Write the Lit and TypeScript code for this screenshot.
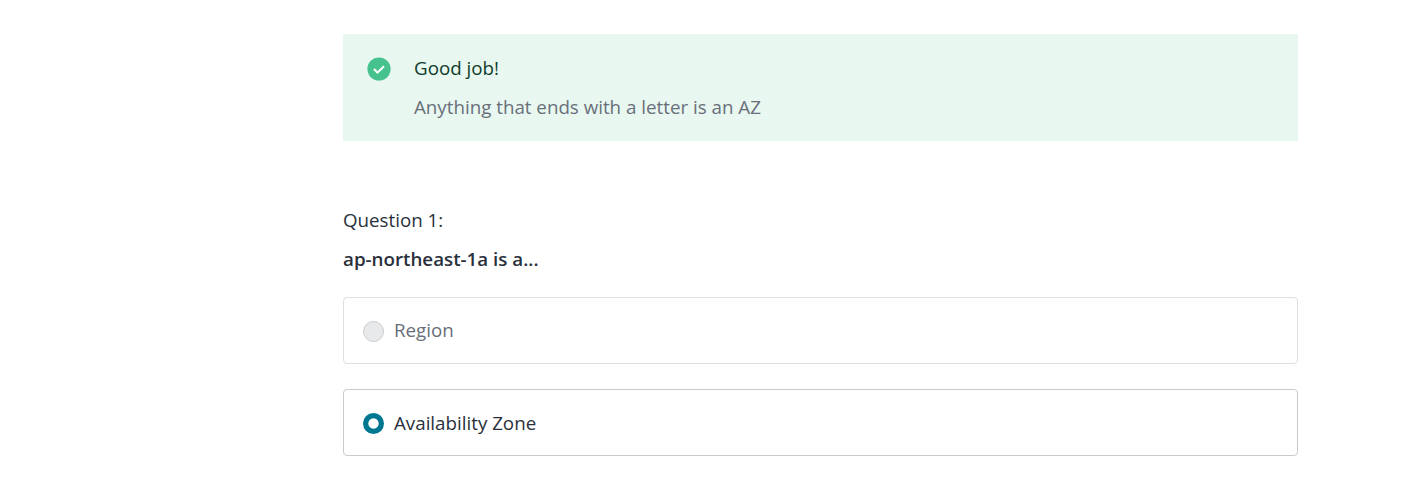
import { LitElement, html, css } from "lit";
import { customElement } from "lit/decorators.js";

@customElement("app-root")
export class AppRoot extends LitElement {
  static styles = css`
    :host { display: block; box-sizing: border-box; min-height: 498px; padding: 34px 103px 42px 343px; background: #fff; color: #29303b; font-family: "Open Sans", sans-serif; font-size: 18.75px; line-height: 25px; }
    * { box-sizing: border-box; }
    .alert { display: flex; height: 107px; padding: 21px 24px; gap: 23px; background: #e8f7f0; }
    .check { width: 24px; height: 24px; margin-top: 2px; flex: none; }
    .title { color: #0f3c2c; }
    .detail { margin-top: 14px; color: #686f7a; }
    .question { margin-top: 66px; }
    .prompt { margin-top: 14px; font-weight: 600; }
    .option { display: flex; align-items: center; height: 67px; padding: 0 19px; gap: 10px; border: 1px solid #dedfe0; border-radius: 4px; color: #686f7a; }
    .option.first { margin-top: 26px; }
    .first .label { padding-bottom: 2px; }
    .option.selected { margin-top: 25px; border-color: #cacbcc; color: #29303b; }
    .radio { width: 21px; height: 21px; margin-top: 1px; border: 1px solid #cacbcc; border-radius: 50%; background: #e8e9eb; }
    .selected .radio { border: 0; background: radial-gradient(circle, #fff 4.7px, #007791 5.6px); }
  `;

  render() {
    return html`
      <section class="alert">
        <svg class="check" viewBox="0 0 24 24"><circle cx="12" cy="12" r="11.6" fill="#46c28e"/><path d="M6.9 12l3.6 3.5 6.6-6.2" fill="none" stroke="#fff" stroke-width="2"/></svg>
        <div><div class="title">Good job!</div><div class="detail">Anything that ends with a letter is an AZ</div></div>
      </section>
      <div class="question">Question 1:</div>
      <div class="prompt">ap-northeast-1a is a...</div>
      <div class="option first"><span class="radio"></span><span class="label">Region</span></div>
      <div class="option selected"><span class="radio"></span><span class="label">Availability Zone</span></div>
    `;
  }
}
